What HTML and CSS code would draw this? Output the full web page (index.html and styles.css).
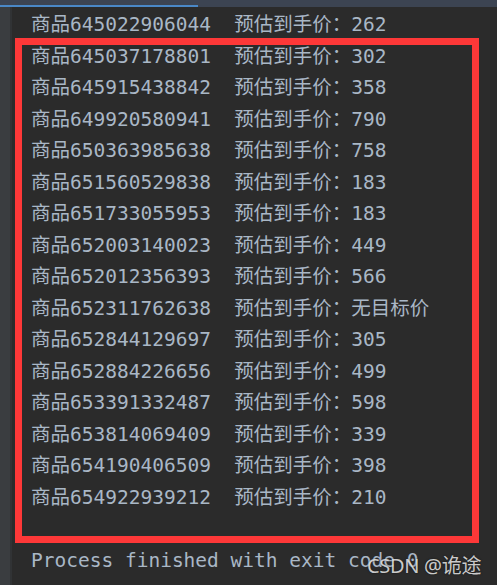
FILE: index.html
```html
<!DOCTYPE html>
<html lang="zh">
<head>
<meta charset="utf-8">
<link rel="stylesheet" href="styles.css">
</head>
<body>
<div class="topbar"><div class="tab-line"></div></div>
<div class="main">
  <div class="gutter"></div>
  <div class="console">
    <div class="line">商品645022906044  预估到手价：262</div>
    <div class="line">商品645037178801  预估到手价：302</div>
    <div class="line">商品645915438842  预估到手价：358</div>
    <div class="line">商品649920580941  预估到手价：790</div>
    <div class="line">商品650363985638  预估到手价：758</div>
    <div class="line">商品651560529838  预估到手价：183</div>
    <div class="line">商品651733055953  预估到手价：183</div>
    <div class="line">商品652003140023  预估到手价：449</div>
    <div class="line">商品652012356393  预估到手价：566</div>
    <div class="line">商品652311762638  预估到手价：无目标价</div>
    <div class="line">商品652844129697  预估到手价：305</div>
    <div class="line">商品652884226656  预估到手价：499</div>
    <div class="line">商品653391332487  预估到手价：598</div>
    <div class="line">商品653814069409  预估到手价：339</div>
    <div class="line">商品654190406509  预估到手价：398</div>
    <div class="line">商品654922939212  预估到手价：210</div>
    <div class="line"> </div>
    <div class="line">Process finished with exit code 0</div>
  </div>
</div>
<div class="highlight"></div>
<div class="watermark">CSDN @诡途</div>
</body>
</html>
```
FILE: styles.css
```css
html, body {
  margin: 0;
  padding: 0;
}
body {
  width: 497px;
  height: 585px;
  background: #2b2b2b;
  overflow: hidden;
  position: relative;
}
.topbar {
  height: 7px;
  background: #3c4452;
  display: flex;
  align-items: flex-end;
}
.tab-line {
  width: 198px;
  height: 2px;
  background: #4a88c7;
}
.main {
  display: flex;
  height: 578px;
}
.gutter {
  width: 10px;
  background: #3a3d40;
  border-right: 2px solid #313335;
  flex: none;
}
.console {
  padding: 2px 0 0 19px;
  font-family: "DejaVu Sans Mono", "Noto Sans CJK SC", monospace;
  font-size: 19.5px;
  line-height: 31.5px;
  color: #a9b7c6;
}
.line {
  height: 31.5px;
  white-space: pre;
}
.highlight {
  position: absolute;
  left: 15px;
  top: 38px;
  width: 450px;
  height: 491px;
  border: 7px solid #fd3838;
}
.watermark {
  position: absolute;
  left: 367px;
  top: 552px;
  font-family: "Noto Sans", "Noto Sans CJK SC", sans-serif;
  font-size: 20px;
  line-height: 28px;
  color: rgba(235, 235, 235, 0.85);
  text-shadow: 0 0 2px rgba(0, 0, 0, 0.6);
  letter-spacing: -0.3px;
}
```
